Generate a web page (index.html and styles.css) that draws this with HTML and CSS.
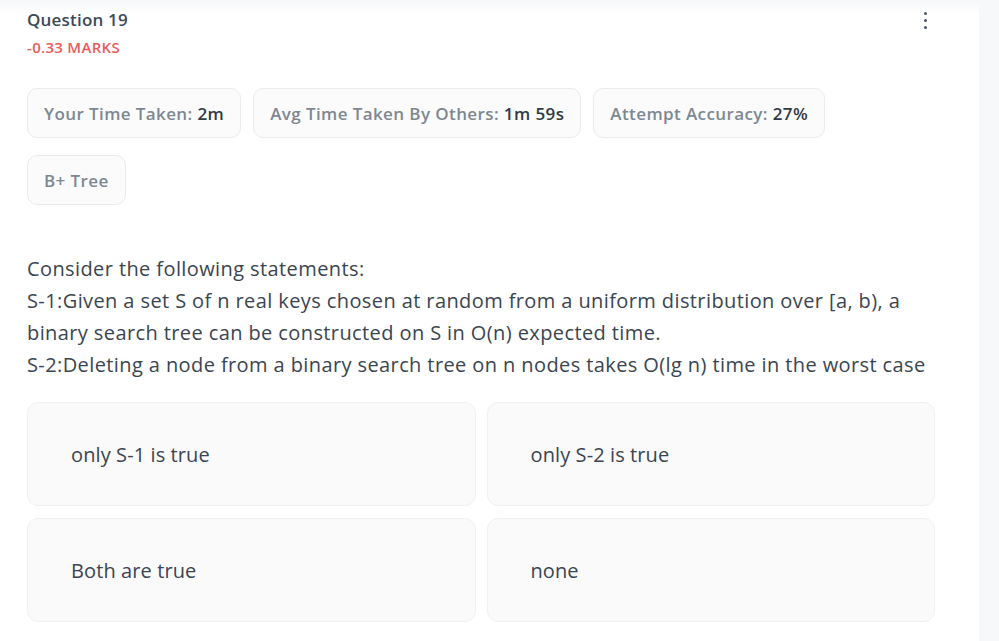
FILE: index.html
```html
<!DOCTYPE html>
<html>
<head>
<meta charset="utf-8">
<link rel="stylesheet" href="styles.css">
</head>
<body>
<div class="page">
  <main class="main">
    <header class="head">
      <div>
        <div class="qtitle">Question 19</div>
        <div class="marks">-0.33 MARKS</div>
      </div>
      <div class="more" aria-label="more"><span></span><span></span><span></span></div>
    </header>
    <div class="chips">
      <div class="chip">Your Time Taken: <b>2m</b></div>
      <div class="chip">Avg Time Taken By Others: <b>1m 59s</b></div>
      <div class="chip">Attempt Accuracy: <b>27%</b></div>
    </div>
    <div class="chips">
      <div class="chip">B+ Tree</div>
    </div>
    <div class="question">
      Consider the following statements:<br>
      S-1:Given a set S of n real keys chosen at random from a uniform distribution over [a, b), a binary search tree can be constructed on S in O(n) expected time.<br>
      S-2:Deleting a node from a binary search tree on n nodes takes O(lg n) time in the worst case
    </div>
    <div class="options">
      <div class="option">only S-1 is true</div>
      <div class="option">only S-2 is true</div>
      <div class="option">Both are true</div>
      <div class="option">none</div>
    </div>
  </main>
  <aside class="side"></aside>
</div>
</body>
</html>
```
FILE: styles.css
```css
* { box-sizing: border-box; }
html, body { margin: 0; padding: 0; }
body {
  font-family: "Open Sans", "Lato", sans-serif;
  color: #3a4552;
  background: #ffffff;
  width: 999px;
  height: 641px;
  overflow: hidden;
}
.page {
  display: flex;
  height: 641px;
}
.main {
  width: 979px;
  padding: 9px 44px 0 27px;
  background: linear-gradient(#f6f7f9 0px, #ffffff 14px);
}
.side {
  width: 20px;
  background: #f7f8fa;
}
.head {
  display: flex;
  justify-content: space-between;
  align-items: flex-start;
  height: 79px;
}
.qtitle {
  font-size: 17px;
  font-weight: 600;
  color: #3d4a57;
  line-height: 22px;
  letter-spacing: 0.2px;
}
.marks {
  font-size: 15px;
  font-weight: 600;
  color: #ea5b5b;
  line-height: 18px;
  margin-top: 7px;
  letter-spacing: 0.3px;
}
.more {
  display: flex;
  flex-direction: column;
  gap: 4px;
  padding-top: 3px;
  margin-right: 8px;
}
.more span {
  width: 3px;
  height: 3px;
  border-radius: 50%;
  background: #4a5561;
}
.chips {
  display: flex;
  gap: 12px;
  margin-bottom: 17px;
}
.chip {
  height: 50px;
  padding: 0 16px;
  display: flex;
  align-items: center;
  border: 1px solid #e9ecef;
  border-radius: 10px;
  background: #fbfbfc;
  font-size: 17px;
  letter-spacing: 0.4px;
  color: #7d8893;
  font-weight: 600;
  white-space: pre;
}
.chip b {
  color: #2f3b48;
  font-weight: 600;
}
.question {
  margin-top: 48px;
  font-size: 20px;
  line-height: 32px;
  letter-spacing: 0.4px;
  color: #3a4552;
  padding-right: 4px;
}
.options {
  margin-top: 21px;
  display: grid;
  grid-template-columns: 1fr 1fr;
  gap: 12px 11px;
}
.option {
  height: 104px;
  display: flex;
  align-items: center;
  padding-left: 43px;
  border: 1px solid #f0f1f3;
  border-radius: 11px;
  background: #fafafb;
  font-size: 20px;
  letter-spacing: 0.1px;
  color: #3a4552;
}
```
